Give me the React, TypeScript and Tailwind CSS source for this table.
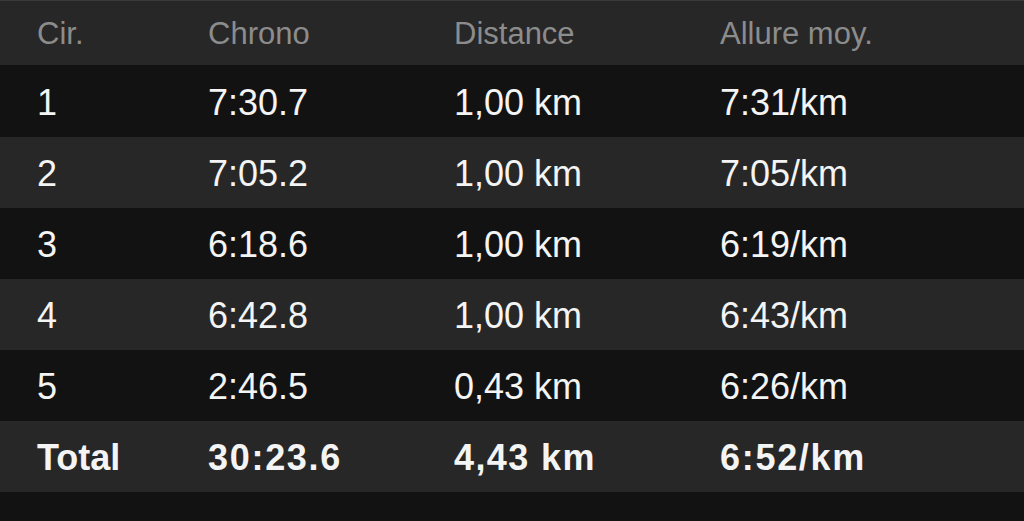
const laps = [
  { lap: '1', time: '7:30.7', dist: '1,00 km', pace: '7:31/km' },
  { lap: '2', time: '7:05.2', dist: '1,00 km', pace: '7:05/km' },
  { lap: '3', time: '6:18.6', dist: '1,00 km', pace: '6:19/km' },
  { lap: '4', time: '6:42.8', dist: '1,00 km', pace: '6:43/km' },
  { lap: '5', time: '2:46.5', dist: '0,43 km', pace: '6:26/km' },
]

const cols = 'grid grid-cols-[171px_246px_266px_1fr] items-center pl-[37px]'

export default function App() {
  return (
    <div
      className="w-[1024px] h-[521px] bg-[#121212] text-[#f4f4f4] overflow-hidden border-t border-[#3a3a3a]"
      style={{ fontFamily: '"Liberation Sans", Arial, sans-serif' }}
    >
      {/* Header */}
      <div className={`${cols} h-[64px] pt-[2px] bg-[#272727] text-[31px] text-[#8c8c8c]`}>
        <span>Cir.</span>
        <span>Chrono</span>
        <span>Distance</span>
        <span>Allure moy.</span>
      </div>

      {laps.map((l, i) => (
        <div
          key={l.lap}
          className={`${cols} ${i === 0 ? 'h-[72px]' : 'h-[71px]'} pt-[3px] ${
            i % 2 === 0 ? 'bg-[#121212]' : 'bg-[#272727]'
          } text-[36px]`}
        >
          <span>{l.lap}</span>
          <span>{l.time}</span>
          <span>{l.dist}</span>
          <span>{l.pace}</span>
        </div>
      ))}

      {/* Total */}
      <div className={`${cols} h-[71px] pt-[3px] bg-[#272727] text-[36px] font-bold`}>
        <span>Total</span>
        <span className="tracking-[1.7px]">30:23.6</span>
        <span className="tracking-[1.4px]">4,43 km</span>
        <span className="tracking-[1.7px]">6:52/km</span>
      </div>
    </div>
  )
}
